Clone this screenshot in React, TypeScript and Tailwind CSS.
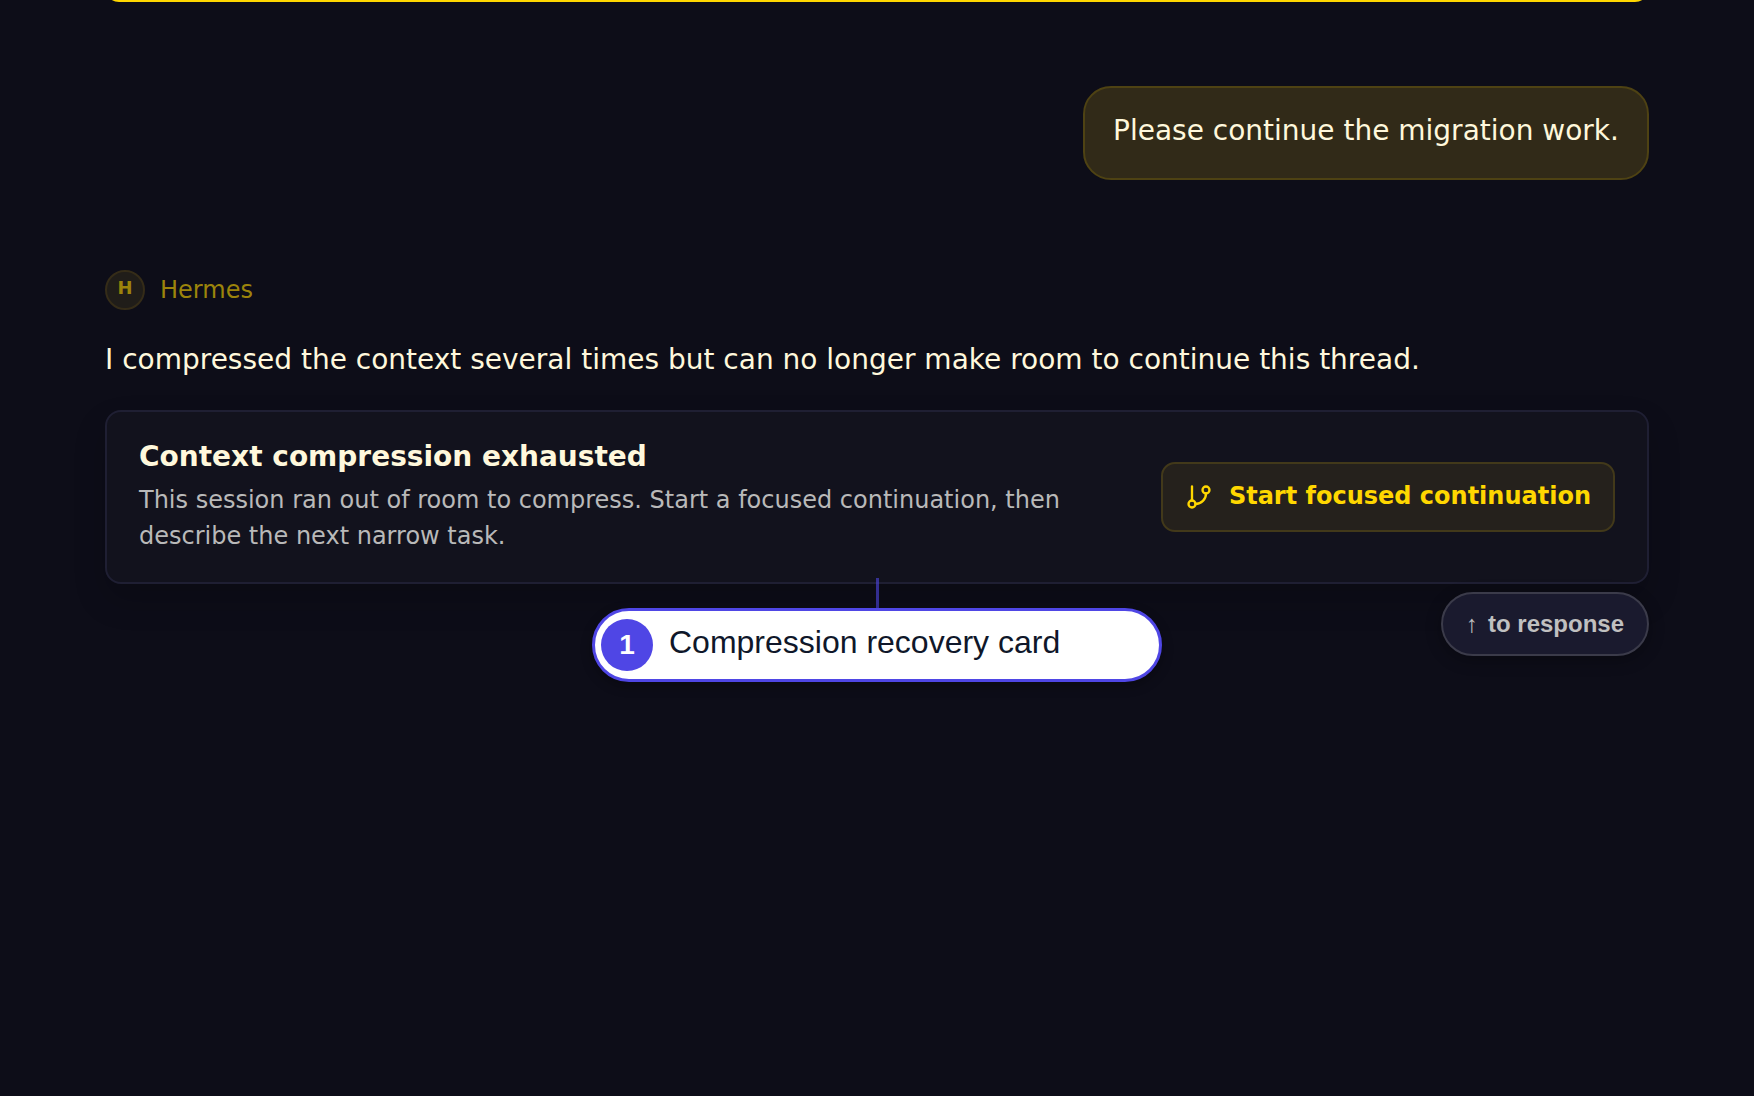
import type { ReactNode } from 'react';

function GitBranchIcon() {
  return (
    <svg
      viewBox="0 0 24 24"
      className="size-7 shrink-0"
      fill="none"
      stroke="currentColor"
      strokeWidth="2"
      strokeLinecap="round"
      strokeLinejoin="round"
      aria-hidden="true"
    >
      <line x1="6" y1="3" x2="6" y2="15" />
      <circle cx="18" cy="6" r="3" />
      <circle cx="6" cy="18" r="3" />
      <path d="M18 9a9 9 0 0 1-9 9" />
    </svg>
  );
}

function UserMessage({ children }: { children: ReactNode }) {
  return (
    <div className="flex justify-end">
      <div className="rounded-[28px] border-2 border-[#4e4213] bg-[#312a18] px-7 pt-5 pb-6 text-[28px] leading-[46px]">
        {children}
      </div>
    </div>
  );
}

function Callout({ step, label }: { step: number; label: string }) {
  return (
    <div className="absolute top-full left-1/2 -mt-1 flex w-[570px] -translate-x-1/2 flex-col items-center">
      <div className="h-[30px] w-[3px] bg-[#4f46e5]/60" />
      <div className="flex h-[74px] w-full items-center gap-4 rounded-full border-3 border-[#4f46e5] bg-white px-1.5 font-['Liberation_Sans',sans-serif] text-[#0f172a] shadow-[0_4px_12px_rgba(0,0,0,0.3)]">
        <span className="flex size-[52px] items-center justify-center rounded-full bg-[#4f46e5] text-[28px] font-bold text-white">
          {step}
        </span>
        <span className="pb-1.5 text-[32px] leading-10">{label}</span>
      </div>
    </div>
  );
}

function RecoveryCard() {
  return (
    <section className="relative flex items-center justify-between gap-8 rounded-2xl border-2 border-[#1f1f33] bg-[#12121d] px-8 py-7 shadow-[0_16px_32px_rgba(0,0,0,0.18)]">
      <div className="max-w-[980px]">
        <h2 className="text-[28px] leading-[34px] font-bold">Context compression exhausted</h2>
        <p className="mt-2 text-2xl leading-9 text-[#b9b9b9]">
          This session ran out of room to compress. Start a focused continuation, then describe the next narrow task.
        </p>
      </div>
      <button
        type="button"
        className="flex h-[70px] shrink-0 items-center gap-4 rounded-[14px] border-2 border-[#42391a] bg-[#25211c] px-[22px] text-2xl font-bold text-[#ffd700]"
      >
        <GitBranchIcon />
        <span className="pb-0.5">Start focused continuation</span>
      </button>
      <Callout step={1} label="Compression recovery card" />
    </section>
  );
}

export default function App() {
  return (
    <div className="min-h-screen overflow-hidden bg-[#0d0d18] font-['DejaVu_Sans',sans-serif] text-[#fff8dc]">
      <main className="mx-auto w-full px-[105px]">
        {/* bottom edge of the panel scrolled off above */}
        <div className="-mt-10 h-[42px] rounded-[14px] border-2 border-[#ffd700]" />

        <div className="pt-[84px]">
          <UserMessage>Please continue the migration work.</UserMessage>
        </div>

        <article className="pt-[90px]">
          <header className="flex items-center gap-[15px]">
            <span className="flex size-10 items-center justify-center rounded-full border-2 border-[#352c18] bg-[#201d19] pb-1 text-lg font-bold text-[#9c840b]">
              H
            </span>
            <span className="text-2xl leading-10 text-[#9c840b]">Hermes</span>
          </header>
          <p className="py-[26px] text-[28px] leading-[48px]">
            I compressed the context several times but can no longer make room to continue this thread.
          </p>
          <RecoveryCard />
        </article>

        <div className="flex justify-end pt-2">
          <button
            type="button"
            className="relative flex h-16 items-center gap-2.5 rounded-full border-2 border-[#3b3b4a] bg-[#1a1a2e] px-[23px] font-['Liberation_Sans',sans-serif] text-2xl font-bold text-[#c0c0c0] shadow-[0_4px_16px_rgba(0,0,0,0.3)]"
          >
            <span>↑</span>
            <span>to response</span>
          </button>
        </div>
      </main>
    </div>
  );
}
